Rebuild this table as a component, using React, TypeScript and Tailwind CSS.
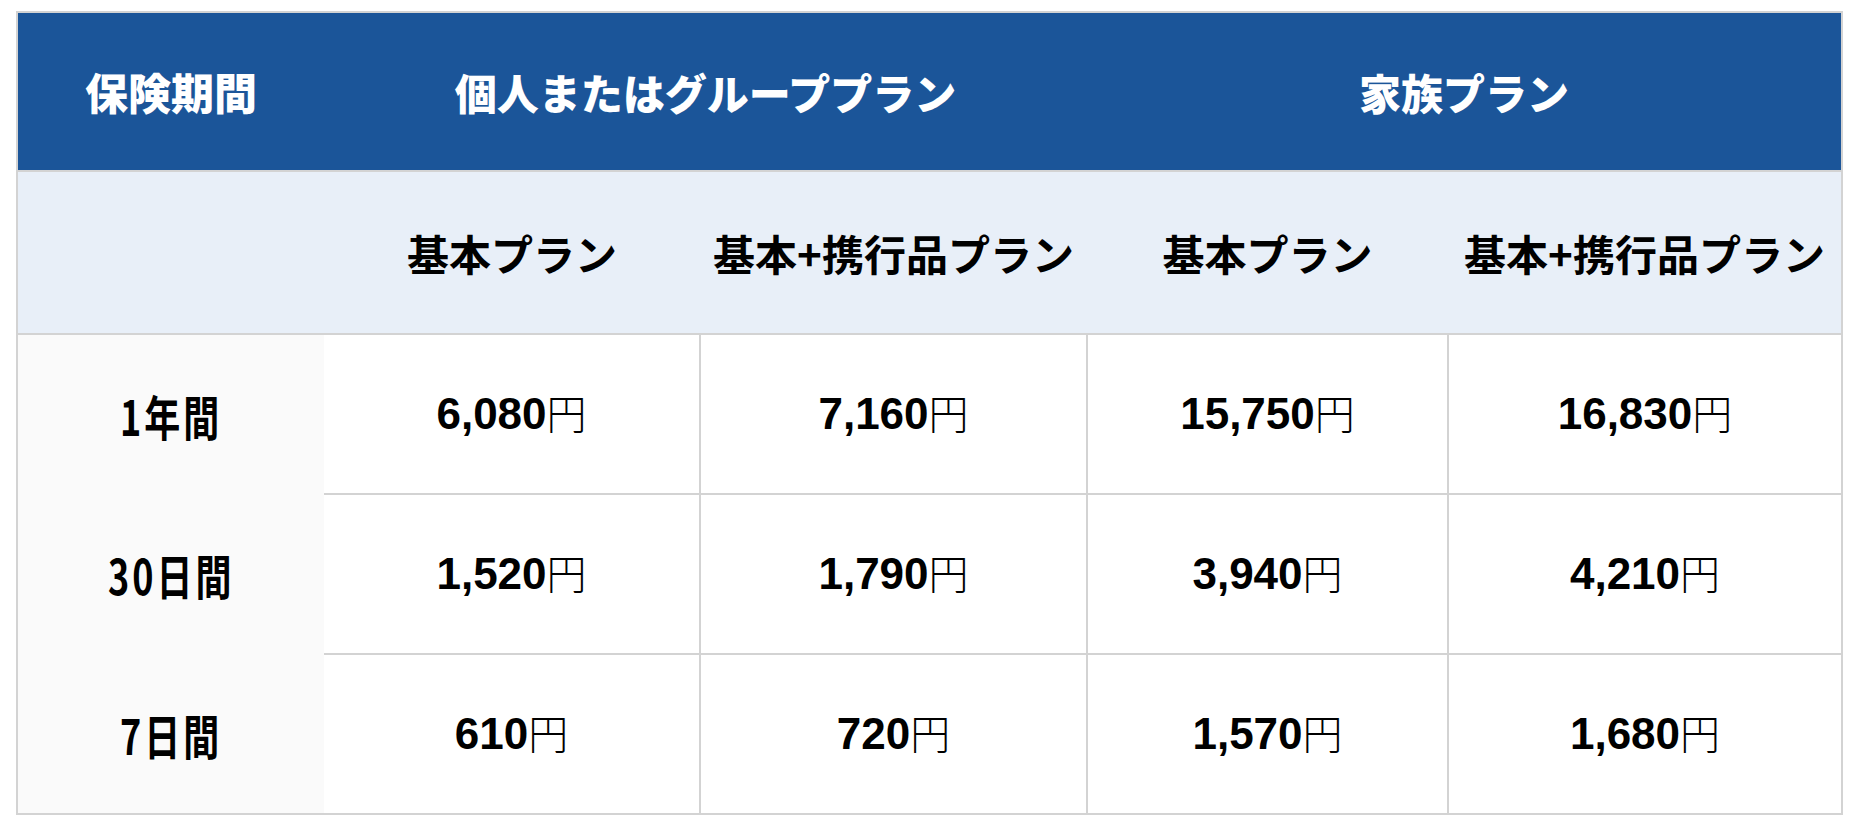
const rows = [
  { label: "1年間", prices: ["6,080", "7,160", "15,750", "16,830"] },
  { label: "30日間", prices: ["1,520", "1,790", "3,940", "4,210"] },
  { label: "7日間", prices: ["610", "720", "1,570", "1,680"] },
];

const subHeads = ["基本プラン", "基本+携行品プラン", "基本プラン", "基本+携行品プラン"];

const jp = "font-['Noto_Sans_CJK_JP',sans-serif]";

export default function App() {
  return (
    <div className="min-h-screen bg-white pl-[16px] pt-[11px]">
      <table className="table-fixed border-collapse border-2 border-[#d3d3d3] text-black">
        <colgroup>
          <col className="w-[307px]" />
          <col className="w-[376px]" />
          <col className="w-[387px]" />
          <col className="w-[361px]" />
          <col className="w-[394px]" />
        </colgroup>
        <thead>
          <tr className="h-[159px] bg-[#1b5599] text-white">
            <th className={`${jp} text-[43px] font-black`}>保険期間</th>
            <th colSpan={2} className={`${jp} text-[42px] font-black`}>
              個人またはグループプラン
            </th>
            <th colSpan={2} className={`${jp} text-[42px] font-black`}>
              家族プラン
            </th>
          </tr>
          <tr className="h-[163px] border-t-2 border-b-2 border-[#d3d3d3] bg-[#e8eff8]">
            <th></th>
            {subHeads.map((h, i) => (
              <th key={i} className={`${jp} text-[42px] font-bold`}>
                {h}
              </th>
            ))}
          </tr>
        </thead>
        <tbody>
          {rows.map((r, ri) => (
            <tr key={ri} className="h-[160px]">
              <th className="bg-[#fafafa]">
                <span
                  className={`${jp} inline-block origin-center scale-x-[0.75] text-[48px] font-bold tracking-[4px]`}
                >
                  {r.label}
                </span>
              </th>
              {r.prices.map((p, pi) => (
                <td
                  key={pi}
                  className={`text-center ${ri < rows.length - 1 ? "border-b-2" : ""} ${
                    pi > 0 ? "border-l-2" : ""
                  } border-[#d3d3d3]`}
                >
                  <span className="font-['Liberation_Sans',Arial,sans-serif] text-[44px] font-bold">{p}</span>
                  <span className={`${jp} text-[40px] font-light`}>円</span>
                </td>
              ))}
            </tr>
          ))}
        </tbody>
      </table>
    </div>
  );
}
